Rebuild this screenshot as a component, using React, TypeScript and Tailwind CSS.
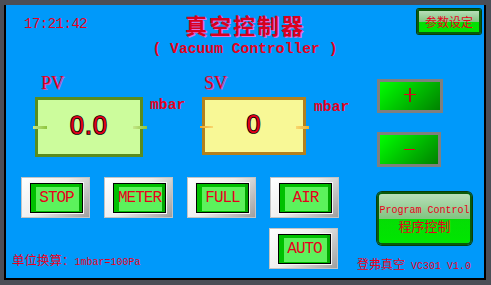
const mono = "font-['Liberation_Mono',monospace]"
const cjk = "font-['Noto_Sans_CJK_SC',sans-serif]"
const red = 'text-[#e8001c]'

function KeyButton({ label }: { label: string }) {
  return (
    <div className="w-[69px] h-[41px] border border-[#c4c4c4] bg-[linear-gradient(135deg,#ffffff_0%,#eeeeee_45%,#9e9e9e_100%)] pt-[5px] pr-[6px] pb-[4px] pl-[8px]">
      <div className="relative h-full border border-black bg-[#00c000] shadow-[0_0_0_1px_#f6f6f6]">
        <div className="absolute left-[5px] top-[3px] right-[3px] bottom-[1px] bg-[#5cf25c]" />
        <div className="absolute right-0 top-0 bottom-0 w-[3px] bg-[#00a800]" />
        <div className={`relative flex h-full items-center justify-center text-[16px] leading-none tracking-[-1px] ${red} ${mono}`}>
          {label}
        </div>
      </div>
    </div>
  )
}

function GlossButton({ className, children }: { className: string; children: React.ReactNode }) {
  return (
    <div className={`flex flex-col overflow-hidden border-2 border-[#0b5a0b] shadow-[0_0_0_1px_#0a3d0a] ${className}`}>
      <div className="relative flex-1 bg-[linear-gradient(#0ad40a,#00e600)]">
        <div className="absolute inset-x-0 top-0 h-1/2 bg-[linear-gradient(#b8deb8,#80c480)]" />
        <div className="relative flex h-full flex-col items-center justify-center">{children}</div>
      </div>
    </div>
  )
}

function ValueBox({ value, tone }: { value: string; tone: 'pv' | 'sv' }) {
  const pv = tone === 'pv'
  return (
    <div
      className={
        pv
          ? 'relative w-[108px] h-[60px] border-[3px] border-[#5a8c1e] bg-[#ccfc9c]'
          : 'relative w-[104px] h-[58px] border-[3px] border-[#b3801c] bg-[#f8f896]'
      }
    >
      <div className={pv ? 'absolute -left-[5px] top-[26px] w-[14px] h-[3px] bg-[linear-gradient(90deg,#c6e88a,#8cc43c)]' : 'absolute -left-[5px] top-[26px] w-[13px] h-[2px] bg-[linear-gradient(90deg,#f0a828,#f8d870)]'} />
      <div className={pv ? 'absolute -right-[7px] top-[26px] w-[14px] h-[3px] bg-[linear-gradient(90deg,#c6e88a,#8cc43c)]' : 'absolute -right-[6px] top-[26px] w-[13px] h-[3px] bg-[linear-gradient(90deg,#f8d870,#f0b030)]'} />
      <div className="flex h-full items-center justify-center pb-[3px] font-['Liberation_Sans',sans-serif] text-[25px] leading-none tracking-[1px] text-[#e0001c] [-webkit-text-stroke:1.6px_#000] [paint-order:stroke_fill]">
        {value}
      </div>
    </div>
  )
}

function StepButton({ sign, className }: { sign: '+' | '-'; className: string }) {
  return (
    <div className={`flex items-center justify-center border-[3px] border-[#7f7f7f] bg-[linear-gradient(135deg,#00ff00,#008200)] ${className}`}>
      {sign === '+' ? (
        <div className="relative w-[12px] h-[14px] -mt-[2px]">
          <div className="absolute left-[5px] top-0 h-full w-[2px] bg-[#a01818]" />
          <div className="absolute left-0 top-[6px] h-[1px] w-full bg-[#e8001c]" />
        </div>
      ) : (
        <div className="h-[1px] w-[11px] bg-[#e8001c]" />
      )}
    </div>
  )
}

export default function App() {
  return (
    <div className="w-[491px] h-[285px] bg-[#4b4e56] pt-[5px] pl-[4px]">
      <div className="flex w-[482px] h-[275px] flex-col border-x-2 border-b-2 border-black bg-[#0099fa]">
        {/* header */}
        <div className="grid h-[55px] grid-cols-[1fr_auto_1fr]">
          <div className={`pl-[18px] pt-[12px] text-[14px] leading-none tracking-[-0.5px] ${red} ${mono}`}>17:21:42</div>
          <div className="flex flex-col items-center pt-[8px]">
            <h1 className={`text-[22px] font-bold leading-none tracking-[2px] text-[#d8001e] [text-shadow:1px_1px_0_#e070d8] ${cjk}`}>真空控制器</h1>
            <div className={`mt-[7px] whitespace-pre text-[14.7px] font-bold leading-none ${red} ${mono}`}>( Vacuum Controller )</div>
          </div>
          <div className="flex justify-end pr-[3px] pt-[4px]">
            <GlossButton className="w-[64px] h-[25px] rounded-[2px]">
              <span className={`text-[12px] leading-none ${red} ${cjk}`}>参数设定</span>
            </GlossButton>
          </div>
        </div>

        {/* readings */}
        <div className="flex h-[110px] pl-[29px]">
          <div className="w-[167px]">
            <div className={`ml-[6px] mt-[14px] h-[18px] font-['Liberation_Serif',serif] text-[18px] leading-none text-[#e0001c] [text-shadow:1px_1px_0_#c060c0]`}>PV</div>
            <div className="mt-[5px] flex items-start">
              <ValueBox value="0.0" tone="pv" />
              <span className={`ml-[7px] mt-[1px] text-[14.7px] font-bold leading-none ${red} ${mono}`}>mbar</span>
            </div>
          </div>
          <div className="w-[175px]">
            <div className={`ml-[2px] mt-[14px] h-[18px] font-['Liberation_Serif',serif] text-[18px] leading-none text-[#e0001c] [text-shadow:1px_1px_0_#c060c0]`}>SV</div>
            <div className="mt-[5px] flex items-start">
              <ValueBox value="0" tone="sv" />
              <span className={`ml-[8px] mt-[3px] text-[14.7px] font-bold leading-none ${red} ${mono}`}>mbar</span>
            </div>
          </div>
          <div className="flex flex-col">
            <StepButton sign="+" className="mt-[19px] w-[66px] h-[34px]" />
            <StepButton sign="-" className="mt-[19px] w-[64px] h-[35px]" />
          </div>
        </div>

        {/* controls */}
        <div className="flex h-[108px]">
          <div className="w-[349px]">
            <div className="mt-[7px] flex gap-[14px] pl-[15px]">
              <KeyButton label="STOP" />
              <KeyButton label="METER" />
              <KeyButton label="FULL" />
              <KeyButton label="AIR" />
            </div>
            <div className="mt-[10px] flex items-end">
              <div className={`mb-[1px] w-[263px] pl-[6px] leading-none ${red}`}>
                <span className={`text-[12.5px] ${cjk}`}>单位换算：</span>
                <span className={`text-[10px] ${mono}`}>1mbar=100Pa</span>
              </div>
              <KeyButton label="AUTO" />
            </div>
          </div>
          <div className="flex flex-col">
            <GlossButton className="ml-[22px] mt-[22px] w-[95px] h-[53px] rounded-[5px]">
              <span className={`whitespace-pre text-[10px] leading-none ${red} ${mono}`}>Program Control</span>
              <span className={`mt-[3px] text-[13px] leading-none ${red} ${cjk}`}>程序控制</span>
            </GlossButton>
            <div className={`ml-[2px] mt-[10px] whitespace-pre leading-none ${red}`}>
              <span className={`text-[12px] ${cjk}`}>登弗真空</span>
              <span className={`text-[10px] ${mono}`}> VC301 V1.0</span>
            </div>
          </div>
        </div>
      </div>
    </div>
  )
}
